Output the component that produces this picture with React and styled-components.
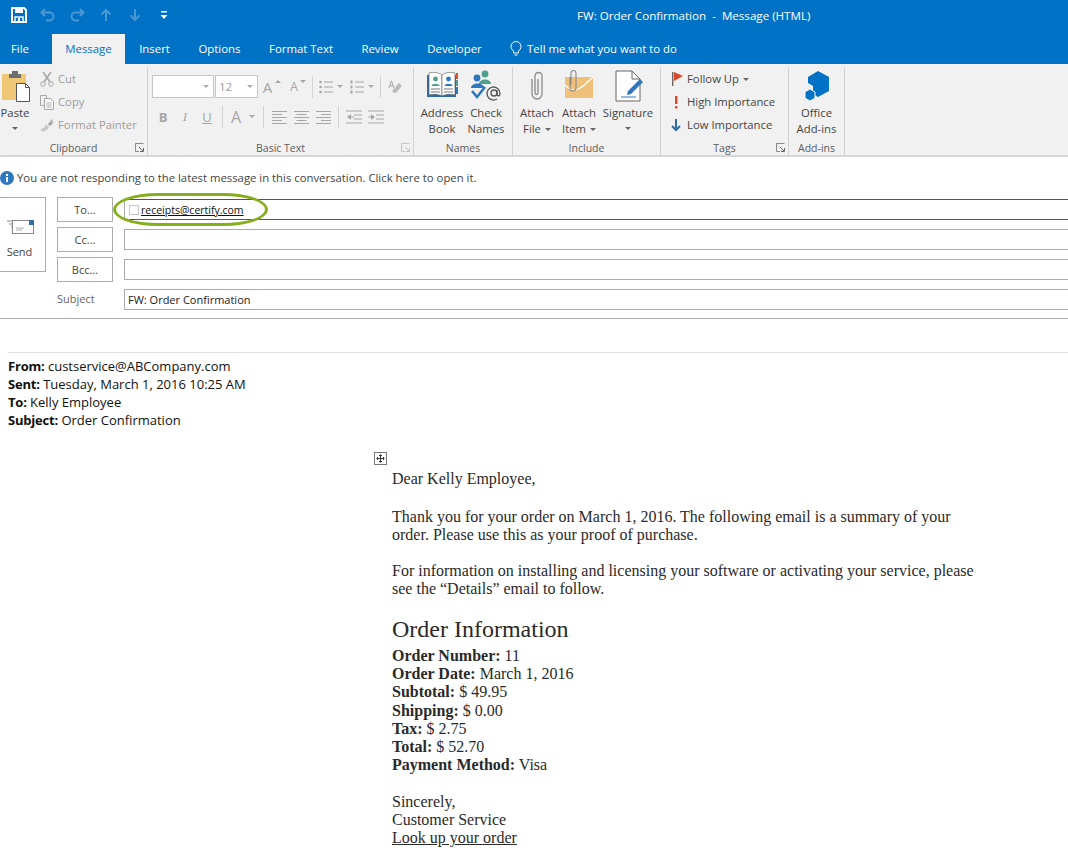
import React from 'react';
import styled, { createGlobalStyle } from 'styled-components';

const GlobalStyle = createGlobalStyle`
  html, body { margin: 0; padding: 0; background: #fff; }
  body { font-family: "Open Sans", "Noto Sans", sans-serif; overflow: hidden; }
  #root { height: 850px; overflow: hidden; }
  * { box-sizing: border-box; }
`;

const uiFont = `"Open Sans", "Noto Sans", sans-serif`;

const Window = styled.div`
  width: 1068px;
  height: 850px;
  overflow: hidden;
`;

const TitleBar = styled.div`
  height: 34px;
  background: #0072c6;
  display: flex;
  align-items: center;
  padding: 0 0 4px 11px;
`;

const QuickAccess = styled.div`
  width: 566px;
  display: flex;
  align-items: center;
  gap: 13px;
`;

const QuickIcon = styled.svg`
  width: 16px;
  height: 16px;
  flex: none;
`;

const WindowTitle = styled.div`
  color: #fff;
  font-size: 11.6px;
  white-space: pre;
`;

const TabBar = styled.div`
  height: 30px;
  background: #0072c6;
  display: flex;
  align-items: stretch;
`;

const Tab = styled.div`
  display: flex;
  align-items: center;
  justify-content: center;
  width: ${(p) => p.$w}px;
  padding-bottom: 2px;
  font-size: 11.4px;
  color: ${(p) => (p.$active ? '#0072c6' : '#fff')};
  background: ${(p) => (p.$active ? '#f1f1f1' : 'transparent')};
  white-space: nowrap;
  gap: 5px;

  &:first-child {
    margin-right: 12px;
  }
`;

const Ribbon = styled.div`
  height: 93px;
  background: #f1f1f1;
  border-bottom: 2px solid #d6d6d6;
  display: flex;
  padding-top: 3px;
`;

const Group = styled.div`
  position: relative;
  width: ${(p) => p.$w}px;
  height: 88px;
  border-right: 1px solid #d2d2d2;
  display: flex;
  flex-direction: column;
  flex: none;
`;

const GroupBody = styled.div`
  flex: 1;
  display: flex;
  padding-left: ${(p) => p.$pad || 0}px;
  min-height: 0;
`;

const GroupLabel = styled.div`
  height: 20px;
  padding-top: 5px;
  text-align: center;
  font-size: 10.5px;
  color: #5c5c5c;
  line-height: 16px;
`;

const Launcher = styled.svg`
  position: absolute;
  right: 3px;
  bottom: 3px;
  width: 9px;
  height: 9px;
`;

const BigButton = styled.div`
  width: ${(p) => p.$w}px;
  flex: none;
  display: flex;
  flex-direction: column;
  align-items: center;
  text-align: center;
  font-size: 11.3px;
  line-height: 16px;
  color: #444;
  white-space: nowrap;
`;

const BigIcon = styled.svg`
  width: ${(p) => p.$w || 32}px;
  height: 32px;
  margin-top: 3px;
  margin-bottom: 3px;
  flex: none;
`;

const Caret = styled.span`
  display: inline-block;
  width: 0;
  height: 0;
  margin-left: 4px;
  vertical-align: middle;
  flex: none;
  border-left: 3px solid transparent;
  border-right: 3px solid transparent;
  border-top: 3px solid ${(p) => p.$color || '#666'};
`;

const PasteCaret = styled(Caret)`
  margin: 6px 0 0;
`;

const SmallStack = styled.div`
  display: flex;
  flex-direction: column;
  margin-left: ${(p) => p.$left || 0}px;
`;

const SmallRow = styled.div`
  height: 23px;
  flex: none;
  display: flex;
  align-items: center;
  gap: 3px;
  font-size: 11.3px;
  color: ${(p) => (p.$muted ? '#9c9c9c' : '#444')};
  white-space: nowrap;
`;

const TagText = styled.span`
  margin-left: -3px;
`;

const SmallIcon = styled.svg`
  width: ${(p) => p.$w || 16}px;
  height: 16px;
  flex: none;
`;

const FormatPanel = styled.div`
  padding: 8px 0 0 4px;
  display: flex;
  flex-direction: column;
  gap: 7px;
`;

const FormatRow = styled.div`
  height: 23px;
  display: flex;
  align-items: center;
`;

const FontBox = styled.div`
  width: ${(p) => p.$w}px;
  height: 23px;
  background: #fff;
  border: 1px solid #c6c6c6;
  margin-right: 1px;
  display: flex;
  align-items: center;
  justify-content: space-between;
  padding: 0 4px 0 3px;
  font-size: 11.5px;
  color: #9c9c9c;
`;

const VSep = styled.div`
  width: 1px;
  height: 22px;
  background: #d2d2d2;
  margin: 0 ${(p) => p.$m || 6}px;
`;

const Spacer = styled.span`
  width: ${(p) => p.$w}px;
  flex: none;
`;

const Glyph = styled.span`
  width: ${(p) => p.$w || 22}px;
  text-align: center;
  font-family: "Liberation Serif", serif;
  font-size: ${(p) => p.$size || 13}px;
  font-weight: ${(p) => (p.$bold ? 700 : 400)};
  font-style: ${(p) => (p.$italic ? 'italic' : 'normal')};
  text-decoration: ${(p) => (p.$under ? 'underline' : 'none')};
  color: #a6a6a6;
  flex: none;
`;

const SansGlyph = styled(Glyph)`
  font-family: ${uiFont};
`;

const SizeMark = styled.span`
  width: 0;
  height: 0;
  flex: none;
  margin: -10px ${(p) => p.$after || 0}px 0 -1px;
  border-left: 3px solid transparent;
  border-right: 3px solid transparent;
  ${(p) => (p.$down ? 'border-top: 3px solid #a6a6a6;' : 'border-bottom: 3px solid #a6a6a6;')}
`;

const InfoBar = styled.div`
  height: 40px;
  padding-top: 11px;
  display: flex;
  align-items: flex-start;
  gap: 3px;
  font-size: 11.33px;
  color: #444;
  line-height: 20px;
`;

const InfoDot = styled.svg`
  width: 14px;
  height: 14px;
  margin-top: 3px;
  flex: none;
`;

const Compose = styled.div`
  position: relative;
  height: 122px;
  display: flex;
  border-bottom: 1px solid #ababab;
`;

const SendButton = styled.div`
  width: 47px;
  height: 75px;
  margin-left: -1px;
  border: 1px solid #ababab;
  display: flex;
  flex-direction: column;
  align-items: center;
  font-size: 11px;
  color: #444;
  padding: 21px 6px 0 0;
  gap: 9px;
  flex: none;
`;

const AddressFields = styled.div`
  margin-left: 11px;
  flex: 1;
  display: flex;
  flex-direction: column;
  gap: 5px;
`;

const FieldRow = styled.div`
  height: 25px;
  display: flex;
  align-items: center;
`;

const AddressButton = styled.div`
  width: 56px;
  height: 25px;
  border: 1px solid #ababab;
  margin-right: 11px;
  display: flex;
  align-items: center;
  justify-content: center;
  font-size: 11px;
  color: #444;
  flex: none;
`;

const SubjectLabel = styled.div`
  width: 67px;
  padding-bottom: 3px;
  font-size: 11px;
  color: #666;
  flex: none;
`;

const AddressInput = styled.div`
  flex: 1;
  height: 21px;
  border: 1px solid ${(p) => (p.$focus ? '#0072c6' : '#ababab')};
  border-right: none;
  ${(p) => p.$focus && 'border-top-color: #555; border-left-color: #ababab;'}
  display: flex;
  align-items: center;
  padding-left: ${(p) => (p.$focus ? 4 : 3)}px;
  font-size: 11px;
  color: #222;
  gap: 2px;
`;

const Contact = styled.span`
  text-decoration: underline;
  color: #111;
  font-size: 10.5px;
`;

const ContactBox = styled.span`
  width: 10px;
  height: 10px;
  border: 1px solid #c8c8c8;
  background: #fff;
  flex: none;
`;

const Highlight = styled.div`
  position: absolute;
  left: 113px;
  top: -4px;
  width: 155px;
  height: 33px;
  border: 3.5px solid #86ae1c;
  border-radius: 46px / 17px;
  pointer-events: none;
`;

const ForwardHeader = styled.div`
  margin: 33px 0 0 8px;
  padding-top: 4px;
  border-top: 1px solid #e1e1e1;
  font-size: 13px;
  line-height: 18px;
  color: #111;
  height: 100px;

  b {
    letter-spacing: -0.2px;
  }
`;

const HeaderLine = styled.div`
  white-space: nowrap;
`;

const MoveHandle = styled.svg`
  display: block;
  width: 13px;
  height: 13px;
  margin-left: 374px;
`;

const Letter = styled.div`
  margin: 5px 0 0 392px;
  width: 585px;
  font-family: "Liberation Serif", "Times New Roman", serif;
  font-size: 16px;
  line-height: 18px;
  color: #2a2a2a;
`;

const Paragraph = styled.p`
  margin: 0 0 ${(p) => p.$after || 18}px;
`;

const Heading = styled.h2`
  margin: 0 0 4px;
  font-weight: 400;
  font-size: 24px;
  line-height: 27px;
  color: #2a2a2a;
`;

const FactLine = styled.div`
  line-height: 18.2px;
`;

const OrderLink = styled.a`
  color: #2a2a2a;
  text-decoration: underline;
`;

const SaveIcon = () => (
  <QuickIcon viewBox="0 0 16 16">
    <path d="M1 1h12l2 2v12H1z" fill="none" stroke="#fff" strokeWidth="2" />
    <rect x="4" y="1" width="8" height="5" fill="#fff" />
    <rect x="4" y="10" width="8" height="5" fill="none" stroke="#fff" strokeWidth="1.4" />
    <rect x="7" y="11" width="2" height="4" fill="#fff" />
  </QuickIcon>
);

const dim = '#4a97d4';

const UndoIcon = ({ flip }) => (
  <QuickIcon viewBox="0 0 16 16" style={flip ? { transform: 'scaleX(-1)' } : undefined}>
    <path d="M5 2L1.500 5.500 5 9M2 5.500h7.500a4 4 0 0 1 0 8H6" fill="none" stroke={dim} strokeWidth="2" />
  </QuickIcon>
);

const ArrowIcon = ({ down }) => (
  <QuickIcon viewBox="0 0 16 16" style={down ? { transform: 'scaleY(-1)' } : undefined}>
    <path d="M8 14V3M3.500 7.500L8 3l4.500 4.500" fill="none" stroke={dim} strokeWidth="2" />
  </QuickIcon>
);

const CustomizeIcon = () => (
  <QuickIcon viewBox="0 0 16 16">
    <rect x="5" y="4" width="6" height="1.5" fill="#fff" />
    <path d="M4.500 8h7L8 12z" fill="#fff" />
  </QuickIcon>
);

const LauncherIcon = ({ light }) => (
  <Launcher viewBox="0 0 9 9">
    <path d="M.5 4V.5H8.500M.5.5V8.500H4" fill="none" stroke={light ? '#c4c4c4' : '#8a8a8a'} />
    <path d="M4 4l4 4M8.500 5v3.500H5" fill="none" stroke={light ? '#c4c4c4' : '#666'} />
  </Launcher>
);

const PasteIcon = () => (
  <BigIcon viewBox="-2 0 32 32">
    <rect x="1" y="4" width="24" height="26" rx="1" fill="#eec777" />
    <path d="M8 4h3V1h6v3h3v4H8z" fill="#6d6d6d" />
    <path d="M15.500 13.500h9l4 4v14h-13z" fill="#fff" stroke="#555" />
    <path d="M24.500 13.500v4h4" fill="none" stroke="#555" />
  </BigIcon>
);

const ScissorsIcon = () => (
  <SmallIcon viewBox="0 0 16 16">
    <path d="M4 1l7 10M12 1L5 11" stroke="#a8a8a8" strokeWidth="1.6" fill="none" />
    <circle cx="4" cy="13" r="2.300" fill="none" stroke="#a8a8a8" />
    <circle cx="12" cy="13" r="2.300" fill="none" stroke="#a8a8a8" />
  </SmallIcon>
);

const CopyIcon = () => (
  <SmallIcon viewBox="0 0 16 16">
    <path d="M1.500 1.500h6v3M1.500 1.500v10h3.500" fill="none" stroke="#a8a8a8" />
    <path d="M5.500 4.500h6l3 3v8h-9z" fill="#f6f6f6" stroke="#a8a8a8" />
    <path d="M7.500 9h5M7.500 11h5M7.500 13h5" stroke="#b4b4b4" />
  </SmallIcon>
);

const PainterIcon = () => (
  <SmallIcon viewBox="0 0 16 16">
    <path d="M9 7l3-3 2 2-3 3z" fill="#9c9c9c" />
    <path d="M12 2l3 3-2 1-2-2z" fill="#bcbcbc" />
    <path d="M1 12c3 0 5-2 6-5l3 3c-1 3-4 4-6 5z" fill="#c9c9c9" />
  </SmallIcon>
);

const ListIcon = ({ numbered }) => (
  <SmallIcon $w={14} viewBox="0 0 14 16">
    {[3, 8, 13].map((y) => (
      <g key={y}>
        {numbered ? (
          <rect x="0.5" y={y - 1.5} width="2" height="3" fill="#a6a6a6" />
        ) : (
          <circle cx="1.5" cy={y} r="1.3" fill="#a6a6a6" />
        )}
        <rect x="5" y={y - 0.5} width="9" height="1" fill="#a6a6a6" />
      </g>
    ))}
  </SmallIcon>
);

const AlignIcon = ({ kind }) => {
  const rows = [2, 5, 8, 11, 14];
  return (
    <SmallIcon $w={15} viewBox="0 0 15 16">
      {rows.map((y, i) => {
        const w = i % 2 ? 10 : 15;
        const x = kind === 'left' ? 0 : kind === 'center' ? (15 - w) / 2 : 15 - w;
        return <rect key={y} x={x} y={y} width={w} height="1" fill="#a6a6a6" />;
      })}
    </SmallIcon>
  );
};

const IndentIcon = ({ out }) => (
  <SmallIcon viewBox="0 0 16 16">
    <path d="M0 2h16M8 6h8M8 10h8M0 14h16" stroke="#a6a6a6" />
    <path d={out ? 'M5 5L1 8l4 3zM5 7.500h3v1H5z' : 'M3 5l4 3-4 3zM0 7.500h3v1H0z'} fill="#a6a6a6" />
  </SmallIcon>
);

const EraserIcon = () => (
  <SmallIcon viewBox="0 0 16 16">
    <path d="M5 12l7-8 3 3-6 7H7z" fill="#bdbdbd" />
    <path d="M2 9l2.500-7L7 9M3 7h3" fill="none" stroke="#a6a6a6" />
  </SmallIcon>
);

const AddressBookIcon = () => (
  <BigIcon viewBox="0 0 32 32">
    <path d="M1 5h29v22H1z" fill="#2f6ca8" />
    <path d="M3 3c4-1 9-1 13 2v21c-4-2-9-2-13-1z" fill="#fff" stroke="#555" strokeWidth=".6" />
    <path d="M29 3c-4-1-9-1-13 2v21c4-2 9-2 13-1z" fill="#fff" stroke="#555" strokeWidth=".6" />
    <circle cx="9.500" cy="9" r="2.400" fill="#4f9e8e" />
    <path d="M5.500 16c0-3 8-3 8 0z" fill="#4f9e8e" />
    <circle cx="22.500" cy="9" r="2.400" fill="#2f77bd" />
    <path d="M18.500 16c0-3 8-3 8 0z" fill="#2f77bd" />
    <path d="M5 19h9M5 22h9M18 19h9M18 22h9" stroke="#777" />
    <rect x="30" y="3" width="2" height="6" fill="#d9542b" />
    <rect x="30" y="10" width="2" height="6" fill="#4f9e8e" />
    <rect x="30" y="17" width="2" height="7" fill="#2f77bd" />
  </BigIcon>
);

const CheckNamesIcon = () => (
  <BigIcon viewBox="0 0 32 32">
    <circle cx="15" cy="4" r="3.400" fill="#4f9e8e" />
    <path d="M9 14c0-6 12-6 12 0z" fill="#4f9e8e" />
    <circle cx="7" cy="8" r="3.400" fill="#2f77bd" />
    <path d="M1 18c0-6 13-6 13 0z" fill="#2f77bd" />
    <path d="M2 21l5 6 8-10" fill="none" stroke="#2f77bd" strokeWidth="2.600" />
    <circle cx="24" cy="23" r="3" fill="none" stroke="#555" strokeWidth="1.300" />
    <path d="M27 20v4.500c0 2 3 2 3-1a6.500 6.500 0 1 0-3 5.500" fill="none" stroke="#555" strokeWidth="1.300" />
  </BigIcon>
);

const ClipIcon = () => (
  <BigIcon viewBox="0 0 32 32">
    <path d="M11 9v15a5 5 0 0 0 10 0V6a3.500 3.500 0 0 0-7 0v17a1.500 1.500 0 0 0 3 0V9" fill="none" stroke="#8b8b8b" strokeWidth="1.300" />
  </BigIcon>
);

const AttachItemIcon = () => (
  <BigIcon $w={30} viewBox="0 0 30 32">
    <rect x="1" y="7" width="28" height="21" fill="#eec07a" />
    <path d="M1 15c8 8 12 8 28-8" fill="none" stroke="#fff" strokeWidth="1.200" />
    <path d="M6 7v11a3 3 0 0 0 6 0V3a2.500 2.500 0 0 0-5 0v12" fill="none" stroke="#8b8b8b" strokeWidth="1.100" />
  </BigIcon>
);

const SignatureIcon = () => (
  <BigIcon viewBox="0 0 32 32">
    <path d="M4 1h16l8 8v22H4z" fill="#fff" stroke="#666" />
    <path d="M20 1v8h8" fill="none" stroke="#666" />
    <path d="M16 21l12-12 3 3-12 12-4 1z" fill="#2f77bd" />
    <path d="M9 27h15" stroke="#2f77bd" />
  </BigIcon>
);

const FlagIcon = () => (
  <SmallIcon viewBox="0 0 16 16">
    <rect x="1" y="1" width="1.400" height="14" fill="#666" />
    <path d="M3 1l9 4-9 5z" fill="#d9482b" />
  </SmallIcon>
);

const BangIcon = () => (
  <SmallIcon viewBox="0 0 16 16">
    <rect x="4" y="2" width="2.400" height="8" fill="#d9482b" />
    <rect x="4" y="12" width="2.400" height="2.400" fill="#d9482b" />
  </SmallIcon>
);

const LowIcon = () => (
  <SmallIcon viewBox="0 0 16 16">
    <path d="M5 2v11M1 9l4 4 4-4" fill="none" stroke="#2f6ca8" strokeWidth="2" />
  </SmallIcon>
);

const AddinsIcon = () => (
  <BigIcon viewBox="0 0 32 32">
    <path d="M17 1l11 6v14l-11 6-5-3v-8l-5-3V7z" fill="#0072c6" />
    <path d="M9 19l5 3v6l-5 3-5-3v-6z" fill="#0072c6" stroke="#f1f1f1" strokeWidth="1" />
  </BigIcon>
);

const SendIcon = () => (
  <svg width="28" height="16" viewBox="0 0 28 16">
    <path d="M1 2h5M3 5h3M5 8h1" stroke="#888" />
    <rect x="6.500" y="1.500" width="21" height="13" fill="#fff" stroke="#888" />
    <rect x="23" y="1" width="5" height="5" fill="#2f6ca8" />
    <path d="M10 9h8M10 11h6" stroke="#aaa" />
  </svg>
);

const tabs = [
  ['File', 40],
  ['Message', 73, true],
  ['Insert', 59],
  ['Options', 71],
  ['Format Text', 92],
  ['Review', 66],
  ['Developer', 83],
];

const facts = [
  ['Order Number:', '11'],
  ['Order Date:', 'March 1, 2016'],
  ['Subtotal:', '$ 49.95'],
  ['Shipping:', '$ 0.00'],
  ['Tax:', '$ 2.75'],
  ['Total:', '$ 52.70'],
  ['Payment Method:', 'Visa'],
];

export default function App() {
  return (
    <Window>
      <GlobalStyle />
      <TitleBar>
        <QuickAccess>
          <SaveIcon />
          <UndoIcon />
          <UndoIcon flip />
          <ArrowIcon />
          <ArrowIcon down />
          <CustomizeIcon />
        </QuickAccess>
        <WindowTitle>{'FW: Order Confirmation  -  Message (HTML)'}</WindowTitle>
      </TitleBar>

      <TabBar>
        {tabs.map(([name, w, active]) => (
          <Tab key={name} $w={w} $active={active}>{name}</Tab>
        ))}
        <Tab $w={195}>
          <svg width="12" height="15" viewBox="0 0 12 15">
            <path d="M3.500 10C2 8.500 1 7.500 1 5.500a5 5 0 0 1 10 0c0 2-1 3-2.500 4.500v2h-5zM4.500 14h3" fill="none" stroke="#fff" />
          </svg>
          Tell me what you want to do
        </Tab>
      </TabBar>

      <Ribbon>
        <Group $w={148}>
          <GroupBody>
            <BigButton $w={30}>
              <PasteIcon />
              Paste
              <PasteCaret />
            </BigButton>
            <SmallStack $left={9}>
              <SmallRow $muted><ScissorsIcon />Cut</SmallRow>
              <SmallRow $muted><CopyIcon />Copy</SmallRow>
              <SmallRow $muted><PainterIcon />Format Painter</SmallRow>
            </SmallStack>
          </GroupBody>
          <GroupLabel>Clipboard</GroupLabel>
          <LauncherIcon />
        </Group>

        <Group $w={266}>
          <GroupBody>
            <FormatPanel>
              <FormatRow>
                <FontBox $w={62}><span /><Caret $color="#aaa" /></FontBox>
                <FontBox $w={43}>12<Caret $color="#aaa" /></FontBox>
                <SansGlyph $size={15} $w={17}>A</SansGlyph>
                <SizeMark $after={6} />
                <SansGlyph $size={12} $w={14}>A</SansGlyph>
                <SizeMark $down />
                <VSep $m={6} />
                <ListIcon />
                <Caret $color="#aaa" />
                <Spacer $w={7} />
                <ListIcon numbered />
                <Caret $color="#aaa" />
                <VSep $m={6} />
                <EraserIcon />
              </FormatRow>
              <FormatRow>
                <SansGlyph $bold $w={22}>B</SansGlyph>
                <Glyph $italic $w={22}>I</Glyph>
                <SansGlyph $under $w={22}>U</SansGlyph>
                <VSep $m={4} />
                <SansGlyph $size={16} $w={18}>A</SansGlyph>
                <Caret $color="#aaa" />
                <VSep $m={8} />
                <AlignIcon kind="left" />
                <Spacer $w={7} />
                <AlignIcon kind="center" />
                <Spacer $w={7} />
                <AlignIcon kind="right" />
                <VSep $m={7} />
                <IndentIcon out />
                <Spacer $w={6} />
                <IndentIcon />
              </FormatRow>
            </FormatPanel>
          </GroupBody>
          <GroupLabel>Basic Text</GroupLabel>
          <LauncherIcon light />
        </Group>

        <Group $w={99}>
          <GroupBody $pad={6}>
            <BigButton $w={44}><AddressBookIcon />Address<br />Book</BigButton>
            <BigButton $w={44}><CheckNamesIcon />Check<br />Names</BigButton>
          </GroupBody>
          <GroupLabel>Names</GroupLabel>
        </Group>

        <Group $w={148}>
          <GroupBody $pad={4}>
            <BigButton $w={40}><ClipIcon /><span>Attach</span><span>File<Caret /></span></BigButton>
            <BigButton $w={44}><AttachItemIcon /><span>Attach</span><span>Item<Caret /></span></BigButton>
            <BigButton $w={54}><SignatureIcon /><span>Signature</span><PasteCaret /></BigButton>
          </GroupBody>
          <GroupLabel>Include</GroupLabel>
        </Group>

        <Group $w={128}>
          <GroupBody $pad={10}>
            <SmallStack>
              <SmallRow><FlagIcon /><TagText>Follow Up<Caret /></TagText></SmallRow>
              <SmallRow><BangIcon /><TagText>High Importance</TagText></SmallRow>
              <SmallRow><LowIcon /><TagText>Low Importance</TagText></SmallRow>
            </SmallStack>
          </GroupBody>
          <GroupLabel>Tags</GroupLabel>
          <LauncherIcon />
        </Group>

        <Group $w={56}>
          <GroupBody>
            <BigButton $w={55}><AddinsIcon />Office<br />Add-ins</BigButton>
          </GroupBody>
          <GroupLabel>Add-ins</GroupLabel>
        </Group>
      </Ribbon>

      <InfoBar>
        <InfoDot viewBox="0 0 14 14">
          <circle cx="7" cy="7" r="7" fill="#2f77bd" />
          <rect x="6" y="6" width="2" height="5" fill="#fff" />
          <rect x="6" y="3" width="2" height="2" fill="#fff" />
        </InfoDot>
        You are not responding to the latest message in this conversation. Click here to open it.
      </InfoBar>

      <Compose>
        <SendButton>
          <SendIcon />
          Send
        </SendButton>
        <AddressFields>
          <FieldRow>
            <AddressButton>To...</AddressButton>
            <AddressInput $focus>
              <ContactBox />
              <Contact>receipts@certify.com</Contact>
            </AddressInput>
          </FieldRow>
          <FieldRow>
            <AddressButton>Cc...</AddressButton>
            <AddressInput />
          </FieldRow>
          <FieldRow>
            <AddressButton>Bcc...</AddressButton>
            <AddressInput />
          </FieldRow>
          <FieldRow>
            <SubjectLabel>Subject</SubjectLabel>
            <AddressInput>FW: Order Confirmation</AddressInput>
          </FieldRow>
        </AddressFields>
        <Highlight />
      </Compose>

      <ForwardHeader>
        <HeaderLine><b>From:</b> custservice@ABCompany.com</HeaderLine>
        <HeaderLine><b>Sent:</b> Tuesday, March 1, 2016 10:25 AM</HeaderLine>
        <HeaderLine><b>To:</b> Kelly Employee</HeaderLine>
        <HeaderLine><b>Subject:</b> Order Confirmation</HeaderLine>
      </ForwardHeader>

      <MoveHandle viewBox="0 0 13 13">
        <rect x=".5" y=".5" width="12" height="12" fill="#fff" stroke="#777" />
        <path d="M6.500 2.500v8M2.500 6.500h8" stroke="#333" />
        <path d="M5 3.500h3M5 9.500h3M3.500 5v3M9.500 5v3" stroke="#333" />
      </MoveHandle>

      <Letter>
        <Paragraph $after={20}>Dear Kelly Employee,</Paragraph>
        <Paragraph>
          Thank you for your order on March 1, 2016. The following email is a summary of your order. Please use this as your proof of purchase.
        </Paragraph>
        <Paragraph>
          For information on installing and licensing your software or activating your service, please see the “Details” email to follow.
        </Paragraph>
        <Heading>Order Information</Heading>
        <Paragraph $after={19}>
          {facts.map(([label, value]) => (
            <FactLine key={label}><b>{label}</b> {value}</FactLine>
          ))}
        </Paragraph>
        <div>Sincerely,</div>
        <div>Customer Service</div>
        <OrderLink href="#order">Look up your order</OrderLink>
      </Letter>
    </Window>
  );
}
